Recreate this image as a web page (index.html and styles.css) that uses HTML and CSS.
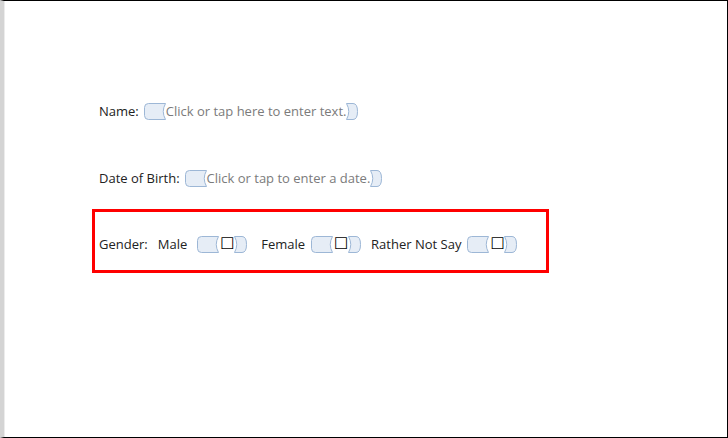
FILE: index.html
```html
<!DOCTYPE html>
<html>
<head lang="en">
    <meta charset="UTF-8">
    <title>Form</title>
    <link rel="stylesheet" href="styles.css">
</head>
<body>
    <div class="page">
        <div class="doc">
            <p class="line line-name">
                <span class="label">Name:</span>
                <span class="ctrl">
                    <svg class="tag-start" width="24" height="19" viewBox="0 0 24 19"><path d="M5.5 1.5 H22.5 Q18 9.5 22.5 17.5 H5.5 Q1.5 17.5 1.5 13.5 V5.5 Q1.5 1.5 5.5 1.5 Z"/></svg>
                    <span class="placeholder">Click or tap here to enter text.</span>
                    <svg class="tag-end" width="14" height="19" viewBox="0 0 14 19"><path d="M1.5 1.5 H8 Q12.5 1.5 12.5 9.5 Q12.5 17.5 8 17.5 H1.5 Q6 9.5 1.5 1.5 Z"/></svg>
                </span>
            </p>
            <p class="line line-date">
                <span class="label">Date of Birth:</span>
                <span class="ctrl">
                    <svg class="tag-start" width="24" height="19" viewBox="0 0 24 19"><path d="M5.5 1.5 H22.5 Q18 9.5 22.5 17.5 H5.5 Q1.5 17.5 1.5 13.5 V5.5 Q1.5 1.5 5.5 1.5 Z"/></svg>
                    <span class="placeholder">Click or tap to enter a date.</span>
                    <svg class="tag-end" width="14" height="19" viewBox="0 0 14 19"><path d="M1.5 1.5 H8 Q12.5 1.5 12.5 9.5 Q12.5 17.5 8 17.5 H1.5 Q6 9.5 1.5 1.5 Z"/></svg>
                </span>
            </p>
            <div class="highlight">
                <p class="line line-gender">
                    <span class="label gender-label">Gender:</span>
                    <span class="option">Male</span>
                    <span class="ctrl check">
                        <svg class="tag-start" width="24" height="19" viewBox="0 0 24 19"><path d="M5.5 1.5 H22.5 Q18 9.5 22.5 17.5 H5.5 Q1.5 17.5 1.5 13.5 V5.5 Q1.5 1.5 5.5 1.5 Z"/></svg>
                        <span class="box">☐</span>
                        <svg class="tag-end" width="15" height="19" viewBox="0 0 15 19"><path d="M1.5 1.5 H9 Q13.5 1.5 13.5 9.5 Q13.5 17.5 9 17.5 H1.5 Q6 9.5 1.5 1.5 Z"/></svg>
                    </span>
                    <span class="option option-tight">Female</span>
                    <span class="ctrl check check-narrow">
                        <svg class="tag-start" width="24" height="19" viewBox="0 0 24 19"><path d="M5.5 1.5 H22.5 Q18 9.5 22.5 17.5 H5.5 Q1.5 17.5 1.5 13.5 V5.5 Q1.5 1.5 5.5 1.5 Z"/></svg>
                        <span class="box">☐</span>
                        <svg class="tag-end" width="15" height="19" viewBox="0 0 15 19"><path d="M1.5 1.5 H9 Q13.5 1.5 13.5 9.5 Q13.5 17.5 9 17.5 H1.5 Q6 9.5 1.5 1.5 Z"/></svg>
                    </span>
                    <span class="option option-tight">Rather Not Say</span>
                    <span class="ctrl check">
                        <svg class="tag-start" width="24" height="19" viewBox="0 0 24 19"><path d="M5.5 1.5 H22.5 Q18 9.5 22.5 17.5 H5.5 Q1.5 17.5 1.5 13.5 V5.5 Q1.5 1.5 5.5 1.5 Z"/></svg>
                        <span class="box">☐</span>
                        <svg class="tag-end" width="15" height="19" viewBox="0 0 15 19"><path d="M1.5 1.5 H9 Q13.5 1.5 13.5 9.5 Q13.5 17.5 9 17.5 H1.5 Q6 9.5 1.5 1.5 Z"/></svg>
                    </span>
                </p>
            </div>
        </div>
    </div>
</body>
</html>
```

FILE: styles.css
```css
* {
    margin: 0;
    padding: 0;
    box-sizing: border-box;
}
body {
    background: #fff;
    font-family: "Open Sans", "Liberation Sans", sans-serif;
    font-size: 13px;
    color: #222;
}
.page {
    width: 728px;
    height: 438px;
    border-top: 1px solid #000;
    border-right: 1px solid #000;
    border-bottom: 1px solid #000;
    border-left: 4px solid #d4d4d4;
    box-shadow: inset 1px 0 0 #ececec;
    overflow: hidden;
}
.doc {
    padding: 100px 0 0 95px;
}
.line {
    display: flex;
    align-items: center;
    height: 20px;
    white-space: nowrap;
}
.line-date {
    margin-top: 47px;
}
.label {
    margin-right: 4px;
}
.ctrl {
    display: flex;
    align-items: center;
}
.ctrl svg path {
    fill: #e6edf6;
    stroke: #9db7d6;
    stroke-width: 1;
}
.tag-start {
    margin-right: -1px;
}
.tag-end {
    margin-left: -1px;
}
.placeholder {
    color: #7b7b7b;
}
.highlight {
    margin: 21px 0 0 -7px;
    width: 457px;
    height: 64px;
    border: 3px solid #f00;
    padding: 22px 0 0 4px;
}
.gender-label {
    margin-right: 10px;
}
.option {
    margin-right: 9px;
}
.option-tight {
    margin-right: 5px;
}
.check {
    margin-right: 13px;
}
.check-narrow {
    margin-right: 9px;
}
.box {
    font-family: "DejaVu Sans", sans-serif;
    font-size: 16px;
    line-height: 18px;
    color: #000;
    width: 14px;
    margin-left: 1px;
    text-align: center;
}
```
